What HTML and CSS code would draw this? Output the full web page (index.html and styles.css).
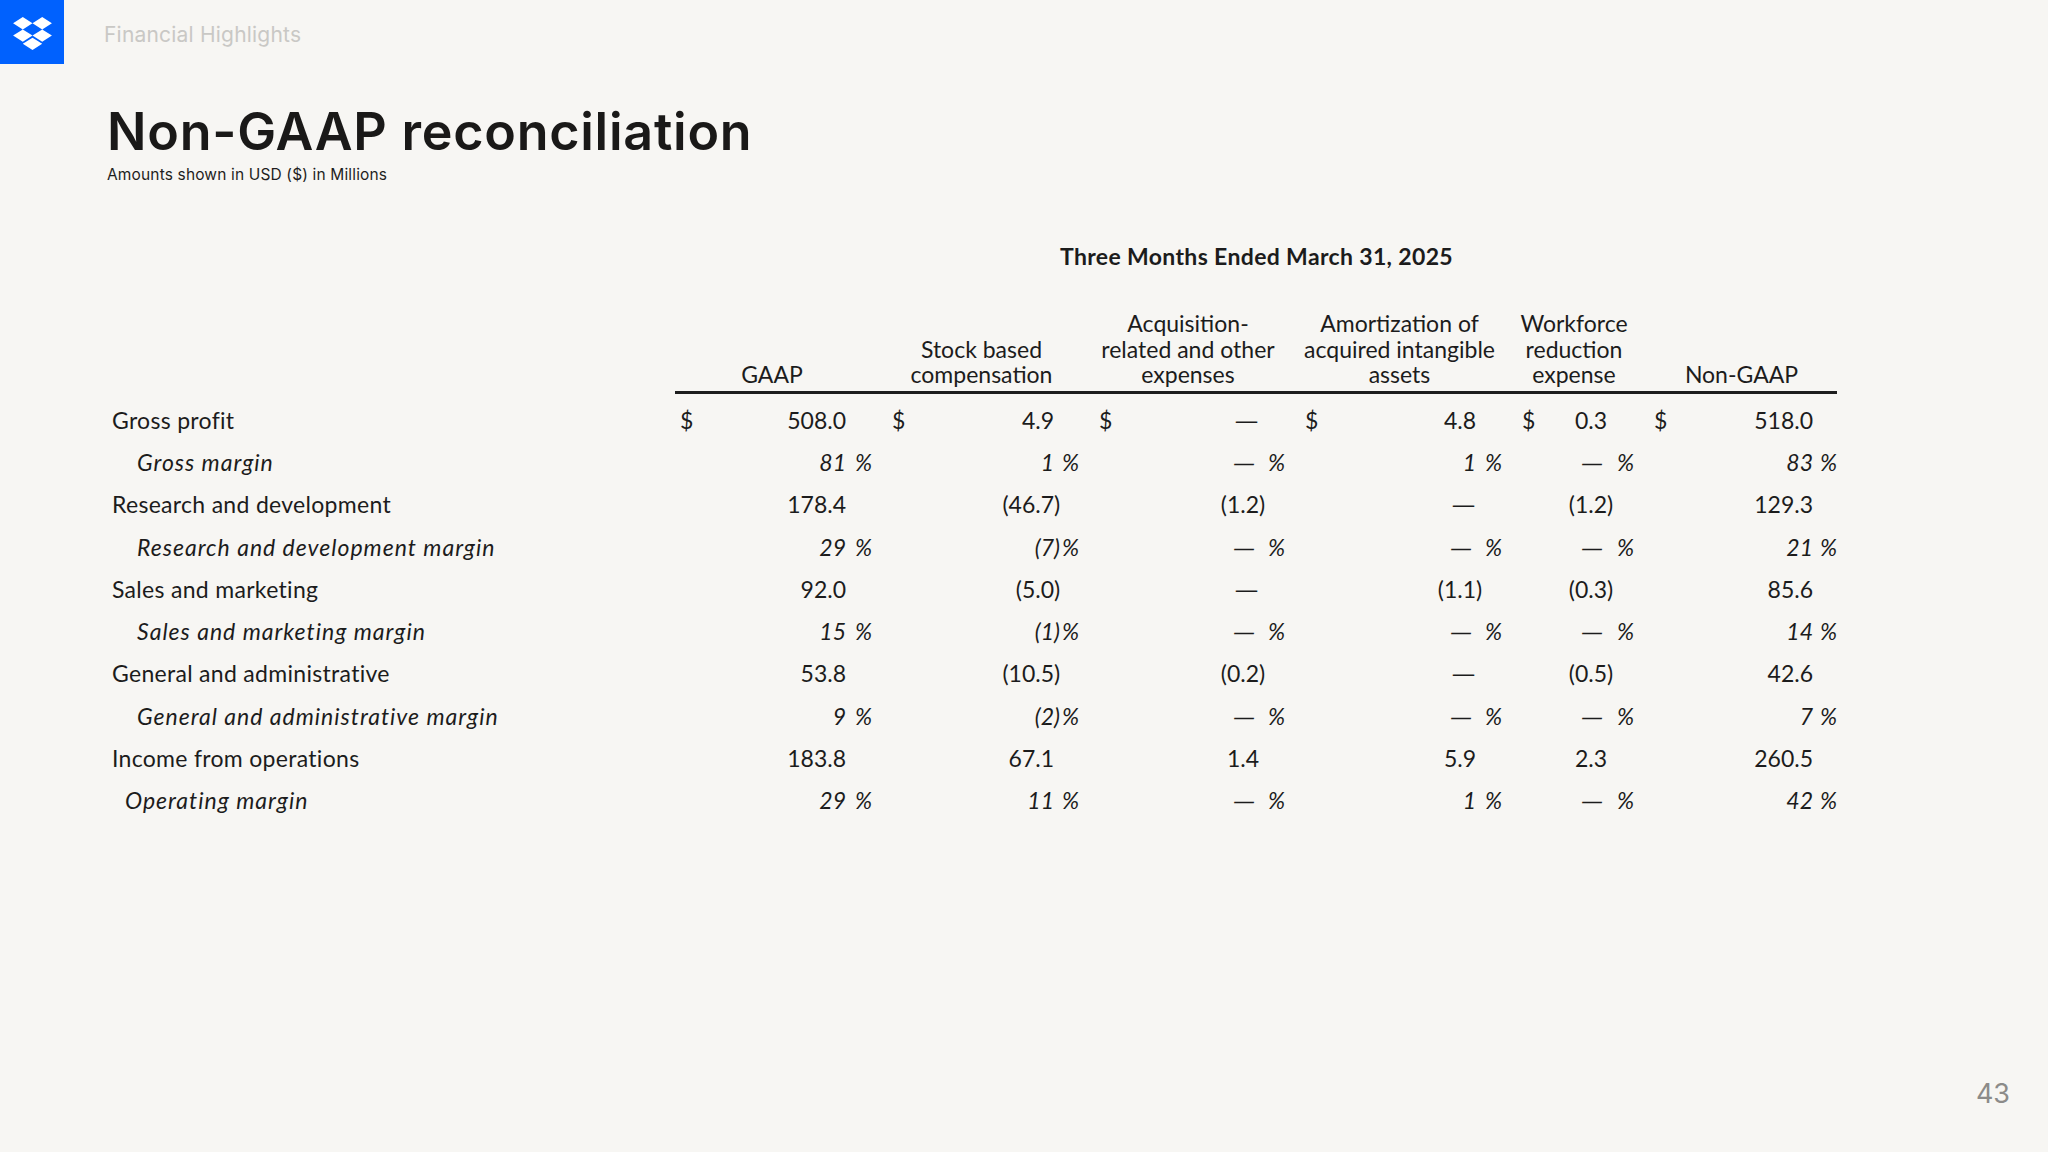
FILE: index.html
```html
<!DOCTYPE html>
<html lang="en">
<head>
<meta charset="utf-8">
<title>Non-GAAP reconciliation</title>
<link rel="stylesheet" href="styles.css">
</head>
<body>
<div class="slide">
  <header class="topbar">
    <div class="logo">
      <svg width="39" height="33" viewBox="0 0 235.45 200" aria-hidden="true">
        <path fill="#ffffff" d="M58.86 0L0 37.5 58.86 75l58.87-37.5L58.86 0zm117.73 0l-58.86 37.5L176.59 75l58.86-37.5L176.59 0zM0 112.5L58.86 150l58.87-37.5L58.86 75 0 112.5zm176.59-37.5l-58.86 37.5 58.86 37.5 58.86-37.5-58.86-37.5zM58.86 162.5l58.87 37.5 58.86-37.5-58.86-37.5-58.86 37.5z"/>
      </svg>
    </div>
    <div class="section">Financial Highlights</div>
  </header>

  <h1 class="title">Non-GAAP reconciliation</h1>
  <p class="subtitle">Amounts shown in USD ($) in Millions</p>

  <div class="recon">
    <div class="period">Three Months Ended March 31, 2025</div>

    <div class="hcell hlabel"></div>
    <div class="hcell">GAAP</div>
    <div class="hcell">Stock based<br>compensation</div>
    <div class="hcell">Acquisition-<br>related and other<br>expenses</div>
    <div class="hcell">Amortization of<br>acquired intangible<br>assets</div>
    <div class="hcell">Workforce<br>reduction<br>expense</div>
    <div class="hcell">Non-GAAP</div>

    <div class="rule"></div>

    <!-- Gross profit -->
    <div class="lbl">Gross profit</div>
    <div class="cur">$</div><div class="val">508.0</div><div class="suf"></div>
    <div class="cur">$</div><div class="val">4.9</div><div class="suf"></div>
    <div class="cur">$</div><div class="val"><span class="dash">—</span></div><div class="suf"></div>
    <div class="cur">$</div><div class="val">4.8</div><div class="suf"></div>
    <div class="cur">$</div><div class="val">0.3</div><div class="suf"></div>
    <div class="cur">$</div><div class="val">518.0</div><div class="suf"></div>

    <!-- Gross margin -->
    <div class="lbl it sub">Gross margin</div>
    <div class="cur"></div><div class="val it">81</div><div class="suf it"><span></span><span>%</span></div>
    <div class="cur"></div><div class="val it">1</div><div class="suf it"><span></span><span>%</span></div>
    <div class="cur"></div><div class="val it"><span class="dash pd">—</span></div><div class="suf it"><span></span><span>%</span></div>
    <div class="cur"></div><div class="val it">1</div><div class="suf it"><span></span><span>%</span></div>
    <div class="cur"></div><div class="val it"><span class="dash pd">—</span></div><div class="suf it"><span></span><span>%</span></div>
    <div class="cur"></div><div class="val it">83</div><div class="suf it"><span></span><span>%</span></div>

    <!-- Research and development -->
    <div class="lbl">Research and development</div>
    <div class="cur"></div><div class="val">178.4</div><div class="suf"></div>
    <div class="cur"></div><div class="val">(46.7</div><div class="suf"><span>)</span></div>
    <div class="cur"></div><div class="val">(1.2</div><div class="suf"><span>)</span></div>
    <div class="cur"></div><div class="val"><span class="dash">—</span></div><div class="suf"></div>
    <div class="cur"></div><div class="val">(1.2</div><div class="suf"><span>)</span></div>
    <div class="cur"></div><div class="val">129.3</div><div class="suf"></div>

    <!-- R&D margin -->
    <div class="lbl it sub">Research and development margin</div>
    <div class="cur"></div><div class="val it">29</div><div class="suf it"><span></span><span>%</span></div>
    <div class="cur"></div><div class="val it">(7</div><div class="suf it"><span>)</span><span>%</span></div>
    <div class="cur"></div><div class="val it"><span class="dash pd">—</span></div><div class="suf it"><span></span><span>%</span></div>
    <div class="cur"></div><div class="val it"><span class="dash pd">—</span></div><div class="suf it"><span></span><span>%</span></div>
    <div class="cur"></div><div class="val it"><span class="dash pd">—</span></div><div class="suf it"><span></span><span>%</span></div>
    <div class="cur"></div><div class="val it">21</div><div class="suf it"><span></span><span>%</span></div>

    <!-- Sales and marketing -->
    <div class="lbl">Sales and marketing</div>
    <div class="cur"></div><div class="val">92.0</div><div class="suf"></div>
    <div class="cur"></div><div class="val">(5.0</div><div class="suf"><span>)</span></div>
    <div class="cur"></div><div class="val"><span class="dash">—</span></div><div class="suf"></div>
    <div class="cur"></div><div class="val">(1.1</div><div class="suf"><span>)</span></div>
    <div class="cur"></div><div class="val">(0.3</div><div class="suf"><span>)</span></div>
    <div class="cur"></div><div class="val">85.6</div><div class="suf"></div>

    <!-- S&M margin -->
    <div class="lbl it sub">Sales and marketing margin</div>
    <div class="cur"></div><div class="val it">15</div><div class="suf it"><span></span><span>%</span></div>
    <div class="cur"></div><div class="val it">(1</div><div class="suf it"><span>)</span><span>%</span></div>
    <div class="cur"></div><div class="val it"><span class="dash pd">—</span></div><div class="suf it"><span></span><span>%</span></div>
    <div class="cur"></div><div class="val it"><span class="dash pd">—</span></div><div class="suf it"><span></span><span>%</span></div>
    <div class="cur"></div><div class="val it"><span class="dash pd">—</span></div><div class="suf it"><span></span><span>%</span></div>
    <div class="cur"></div><div class="val it">14</div><div class="suf it"><span></span><span>%</span></div>

    <!-- General and administrative -->
    <div class="lbl">General and administrative</div>
    <div class="cur"></div><div class="val">53.8</div><div class="suf"></div>
    <div class="cur"></div><div class="val">(10.5</div><div class="suf"><span>)</span></div>
    <div class="cur"></div><div class="val">(0.2</div><div class="suf"><span>)</span></div>
    <div class="cur"></div><div class="val"><span class="dash">—</span></div><div class="suf"></div>
    <div class="cur"></div><div class="val">(0.5</div><div class="suf"><span>)</span></div>
    <div class="cur"></div><div class="val">42.6</div><div class="suf"></div>

    <!-- G&A margin -->
    <div class="lbl it sub">General and administrative margin</div>
    <div class="cur"></div><div class="val it">9</div><div class="suf it"><span></span><span>%</span></div>
    <div class="cur"></div><div class="val it">(2</div><div class="suf it"><span>)</span><span>%</span></div>
    <div class="cur"></div><div class="val it"><span class="dash pd">—</span></div><div class="suf it"><span></span><span>%</span></div>
    <div class="cur"></div><div class="val it"><span class="dash pd">—</span></div><div class="suf it"><span></span><span>%</span></div>
    <div class="cur"></div><div class="val it"><span class="dash pd">—</span></div><div class="suf it"><span></span><span>%</span></div>
    <div class="cur"></div><div class="val it">7</div><div class="suf it"><span></span><span>%</span></div>

    <!-- Income from operations -->
    <div class="lbl">Income from operations</div>
    <div class="cur"></div><div class="val">183.8</div><div class="suf"></div>
    <div class="cur"></div><div class="val">67.1</div><div class="suf"></div>
    <div class="cur"></div><div class="val">1.4</div><div class="suf"></div>
    <div class="cur"></div><div class="val">5.9</div><div class="suf"></div>
    <div class="cur"></div><div class="val">2.3</div><div class="suf"></div>
    <div class="cur"></div><div class="val">260.5</div><div class="suf"></div>

    <!-- Operating margin -->
    <div class="lbl it sub2">Operating margin</div>
    <div class="cur"></div><div class="val it">29</div><div class="suf it"><span></span><span>%</span></div>
    <div class="cur"></div><div class="val it">11</div><div class="suf it"><span></span><span>%</span></div>
    <div class="cur"></div><div class="val it"><span class="dash pd">—</span></div><div class="suf it"><span></span><span>%</span></div>
    <div class="cur"></div><div class="val it">1</div><div class="suf it"><span></span><span>%</span></div>
    <div class="cur"></div><div class="val it"><span class="dash pd">—</span></div><div class="suf it"><span></span><span>%</span></div>
    <div class="cur"></div><div class="val it">42</div><div class="suf it"><span></span><span>%</span></div>
  </div>

  <div class="pageno">43</div>
</div>
</body>
</html>
```

FILE: styles.css
```css
html, body {
  margin: 0;
  padding: 0;
}

body {
  background: #f7f6f3;
  font-family: "Inter", "Liberation Sans", sans-serif;
  color: #1a1918;
}

.slide {
  width: 2048px;
  height: 1152px;
  display: flex;
  flex-direction: column;
  position: relative;
  overflow: hidden;
}

.topbar {
  display: flex;
  align-items: center;
  height: 64px;
}

.logo {
  width: 64px;
  height: 64px;
  background: #0061fe;
  display: flex;
  align-items: center;
  justify-content: center;
}

.logo svg {
  display: block;
  margin-top: 2px;
}

.section {
  margin-left: 40px;
  margin-top: 5px;
  font-size: 21px;
  color: #c9c8c5;
  letter-spacing: 0.2px;
}

.title {
  margin: 42px 0 0 0;
  padding-left: 107px;
  font-size: 52px;
  line-height: 52px;
  font-weight: 600;
  letter-spacing: 0.75px;
  color: #1a1918;
}

.subtitle {
  margin: 8px 0 0 0;
  padding-left: 107px;
  font-size: 15.5px;
  line-height: 18px;
  letter-spacing: 0.15px;
  color: #1f1e1d;
}

.recon {
  margin-top: 59px;
  margin-left: 108px;
  display: grid;
  grid-template-columns: 552px 40px 146px 26px 40px 142px 25px 41px 139px 26px 40px 151px 26px 40px 65px 27px 41px 138px 24px;
  font-family: "Lato", "Open Sans", sans-serif;
  font-size: 23px;
  color: #1c1c1c;
}

.period {
  grid-column: 2 / -1;
  text-align: center;
  font-weight: 700;
  line-height: 26px;
  letter-spacing: 0.35px;
  margin-bottom: 42px;
  padding-left: 16px;
}

.hcell {
  grid-column: span 3;
  align-self: end;
  text-align: center;
  line-height: 25.5px;
  padding-left: 12px;
}

.hcell.hlabel {
  grid-column: 1;
}

.rule {
  grid-column: 2 / -1;
  margin-left: 15px;
  height: 3px;
  background: #1e1e1e;
  margin-top: 3px;
  margin-bottom: 5px;
}

.lbl,
.cur,
.val,
.suf {
  height: 42.3px;
  display: flex;
  align-items: center;
  white-space: nowrap;
}

.lbl {
  padding-left: 4px;
  letter-spacing: 0.3px;
}

.lbl.sub {
  padding-left: 29px;
  letter-spacing: 1px;
}

.lbl.sub2 {
  padding-left: 17px;
  letter-spacing: 1px;
}

.cur {
  padding-left: 20px;
}

.val {
  justify-content: flex-end;
}

.suf {
  justify-content: space-between;
}

.it {
  font-style: italic;
}

.dash {
  display: inline-block;
  transform: scaleX(1.4);
  transform-origin: right center;
}

.dash.pd {
  margin-right: 3px;
}

.pageno {
  position: absolute;
  right: 38px;
  bottom: 43px;
  font-size: 27px;
  line-height: 30px;
  color: #8c8b89;
}
```
